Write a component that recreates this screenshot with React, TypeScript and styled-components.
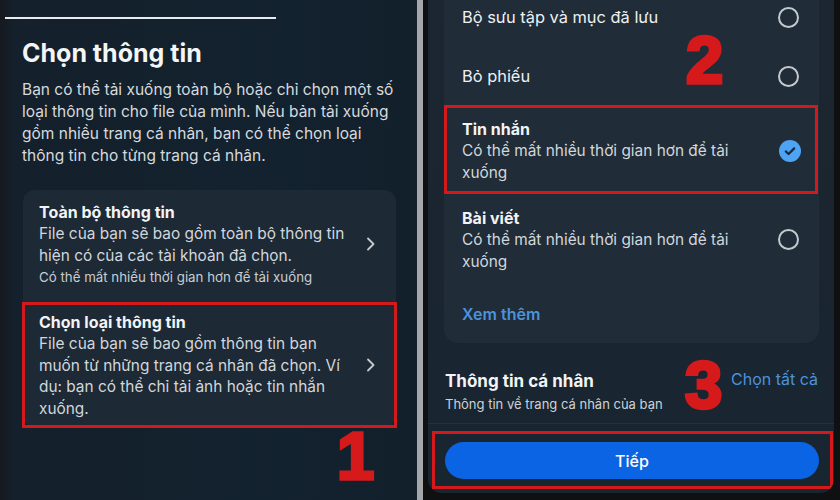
import styled, { createGlobalStyle } from 'styled-components';

const GlobalStyle = createGlobalStyle`
  html, body {
    margin: 0;
    padding: 0;
    background: #0f1113;
  }
  body {
    width: 840px;
    height: 500px;
    overflow: hidden;
    font-family: Inter, "Noto Sans", "DejaVu Sans", sans-serif;
    -webkit-font-smoothing: antialiased;
  }
`;

const Page = styled.div`
  display: flex;
  width: 840px;
  height: 500px;
`;

const LeftPanel = styled.section`
  position: relative;
  width: 417px;
  flex-shrink: 0;
  height: 500px;
  background: linear-gradient(90deg, #16191f 0, #14202b 14px, #13222f 60%, #12202c 100%);
  display: flex;
  flex-direction: column;
`;

const TopRule = styled.div`
  margin: 17px 0 0 5px;
  width: 271px;
  height: 2px;
  background: #e9ebee;
`;

const Title = styled.h1`
  margin: 19px 0 0 22px;
  font-size: 25px;
  line-height: 30px;
  font-weight: 700;
  color: #f3f5f7;
`;

const Intro = styled.p`
  margin: 11px 0 0 22px;
  font-size: 15.5px;
  line-height: 22px;
  color: #d6dade;
  white-space: nowrap;
`;

const OptionCard = styled.div`
  margin: 23px 0 0 23px;
  width: 373px;
  border-radius: 12px;
  background: #1d2935;
  display: flex;
  flex-direction: column;
`;

const OptionRow = styled.div<{ $marked?: boolean }>`
  display: flex;
  align-items: center;
  padding: ${(p) => (p.$marked ? '8px 20px 7px 16px' : '11px 20px 16px 16px')};
  ${(p) => (p.$marked ? 'outline: 3px solid #d4191c; outline-offset: -2px;' : '')}
`;

const OptionText = styled.div`
  flex: 1;
  white-space: nowrap;
`;

const OptionTitle = styled.div`
  font-size: 16px;
  line-height: 22px;
  font-weight: 700;
  color: #f1f3f5;
`;

const OptionDesc = styled.div<{ $lh?: number }>`
  font-size: 15.4px;
  line-height: ${(p) => p.$lh ?? 22}px;
  color: #d2d7dc;
`;

const OptionNote = styled.div`
  font-size: 13.3px;
  line-height: 20px;
  color: #c8cdd2;
`;

const Chevron = () => (
  <svg width="10" height="16" viewBox="0 0 10 16">
    <polyline
      points="2,2.5 7.5,8 2,13.5"
      fill="none"
      stroke="#c5cacf"
      strokeWidth="1.8"
      strokeLinecap="round"
      strokeLinejoin="round"
    />
  </svg>
);

const StepNumber = styled.span<{ $x: number; $y: number }>`
  position: absolute;
  left: ${(p) => p.$x}px;
  top: ${(p) => p.$y}px;
  font-family: "Liberation Sans", Arial, sans-serif;
  font-weight: 700;
  font-size: 67px;
  line-height: 67px;
  color: #d61a1c;
  -webkit-text-stroke: 3.5px #d61a1c;
`;

const Divider = styled.div`
  width: 6px;
  flex-shrink: 0;
  background: #a6a7a8;
`;

const RightOuter = styled.section`
  position: relative;
  flex: 1;
  height: 500px;
  background: #0e1012;
  padding: 0 6px 7px 5px;
  box-sizing: border-box;
  display: flex;
`;

const PhoneFrame = styled.div`
  flex: 1;
  display: flex;
  flex-direction: column;
  background: linear-gradient(180deg, #1c2631 0, #1a2530 60%, #182630 100%);
  border-radius: 0 0 14px 14px;
  overflow: hidden;
`;

const SelectCard = styled.div`
  margin: 0 15px 0 16px;
  background: #202c37;
  border-radius: 0 0 14px 14px;
  display: flex;
  flex-direction: column;
`;

const SelectRow = styled.div<{ $pad: string; $marked?: boolean }>`
  display: flex;
  align-items: center;
  padding: ${(p) => p.$pad};
  white-space: nowrap;
  ${(p) => (p.$marked ? 'outline: 3px solid #d4191c; outline-offset: -2px; margin: 0 2px 0 1px; padding-left: 17px;' : '')}
`;

const SelectLabel = styled.div`
  flex: 1;
  font-size: 16.4px;
  line-height: 22px;
  color: #eef1f3;
`;

const Radio = styled.span`
  width: 17px;
  height: 17px;
  border: 2px solid #c4c9ce;
  border-radius: 50%;
  flex-shrink: 0;
`;

const Checked = () => (
  <svg width="22" height="22" viewBox="0 0 22 22">
    <circle cx="11" cy="11" r="11" fill="#4ea3f3" />
    <polyline
      points="6.8,11.4 9.6,14 15.2,8.4"
      fill="none"
      stroke="#17293a"
      strokeWidth="2.2"
      strokeLinecap="round"
      strokeLinejoin="round"
    />
  </svg>
);

const SeeMore = styled.div`
  padding: 31px 0 18px 18px;
  font-size: 16px;
  line-height: 22px;
  font-weight: 600;
  color: #4c92db;
`;

const Section = styled.div`
  margin: 27px 16px 0 17px;
  padding-bottom: 10px;
  display: flex;
  justify-content: space-between;
  align-items: flex-start;
`;

const SectionTitle = styled.div`
  font-size: 17px;
  line-height: 22px;
  font-weight: 700;
  color: #f2f4f6;
`;

const SectionSub = styled.div`
  margin-top: 3px;
  font-size: 13px;
  line-height: 18px;
  color: #cdd2d7;
`;

const SelectAll = styled.div`
  font-size: 16px;
  line-height: 22px;
  color: #4c92db;
  margin-top: -2px;
`;

const Footer = styled.div`
  border-top: 1px solid #27313b;
  padding: 8px 0 5px;
  display: flex;
  flex-direction: column;
`;

const ButtonBox = styled.div`
  margin: 0 2px 0 5px;
  padding: 10px 13px 9px 12px;
  outline: 3px solid #d4191c;
  outline-offset: -2px;
`;

const PrimaryButton = styled.button`
  width: 100%;
  height: 37px;
  border: none;
  border-radius: 19px;
  background: #0a64e4;
  color: #ffffff;
  font-family: Inter, "Noto Sans", sans-serif;
  font-size: 16px;
  font-weight: 500;
`;

export default function App() {
  return (
    <>
      <GlobalStyle />
      <Page>
        <LeftPanel>
          <TopRule />
          <Title>Chọn thông tin</Title>
          <Intro>
            Bạn có thể tải xuống toàn bộ hoặc chỉ chọn một số
            <br />
            loại thông tin cho file của mình. Nếu bản tải xuống
            <br />
            gồm nhiều trang cá nhân, bạn có thể chọn loại
            <br />
            thông tin cho từng trang cá nhân.
          </Intro>
          <OptionCard>
            <OptionRow>
              <OptionText>
                <OptionTitle>Toàn bộ thông tin</OptionTitle>
                <OptionDesc>
                  File của bạn sẽ bao gồm toàn bộ thông tin
                  <br />
                  hiện có của các tài khoản đã chọn.
                </OptionDesc>
                <OptionNote>Có thể mất nhiều thời gian hơn để tải xuống</OptionNote>
              </OptionText>
              <Chevron />
            </OptionRow>
            <OptionRow $marked>
              <OptionText>
                <OptionTitle>Chọn loại thông tin</OptionTitle>
                <OptionDesc $lh={21.7}>
                  File của bạn sẽ bao gồm thông tin bạn
                  <br />
                  muốn từ những trang cá nhân đã chọn. Ví
                  <br />
                  dụ: bạn có thể chỉ tải ảnh hoặc tin nhắn
                  <br />
                  xuống.
                </OptionDesc>
              </OptionText>
              <Chevron />
            </OptionRow>
          </OptionCard>
          <StepNumber $x={337} $y={422}>1</StepNumber>
        </LeftPanel>
        <Divider />
        <RightOuter>
          <PhoneFrame>
            <SelectCard>
              <SelectRow $pad="6px 20px 19px 18px">
                <SelectLabel>Bộ sưu tập và mục đã lưu</SelectLabel>
                <Radio />
              </SelectRow>
              <SelectRow $pad="18px 20px 19px 18px">
                <SelectLabel>Bỏ phiếu</SelectLabel>
                <Radio />
              </SelectRow>
              <SelectRow $pad="12px 16px 10px 18px" $marked>
                <OptionText>
                  <OptionTitle>Tin nhắn</OptionTitle>
                  <OptionDesc $lh={21.5}>
                    Có thể mất nhiều thời gian hơn để tải
                    <br />
                    xuống
                  </OptionDesc>
                </OptionText>
                <Checked />
              </SelectRow>
              <SelectRow $pad="14px 20px 0 18px">
                <OptionText>
                  <OptionTitle>Bài viết</OptionTitle>
                  <OptionDesc $lh={21.5}>
                    Có thể mất nhiều thời gian hơn để tải
                    <br />
                    xuống
                  </OptionDesc>
                </OptionText>
                <Radio />
              </SelectRow>
              <SeeMore>Xem thêm</SeeMore>
            </SelectCard>
            <Section>
              <div>
                <SectionTitle>Thông tin cá nhân</SectionTitle>
                <SectionSub>Thông tin về trang cá nhân của bạn</SectionSub>
              </div>
              <SelectAll>Chọn tất cả</SelectAll>
            </Section>
            <Footer>
              <ButtonBox>
                <PrimaryButton>Tiếp</PrimaryButton>
              </ButtonBox>
            </Footer>
          </PhoneFrame>
          <StepNumber $x={263} $y={26}>2</StepNumber>
          <StepNumber $x={262} $y={351}>3</StepNumber>
        </RightOuter>
      </Page>
    </>
  );
}
